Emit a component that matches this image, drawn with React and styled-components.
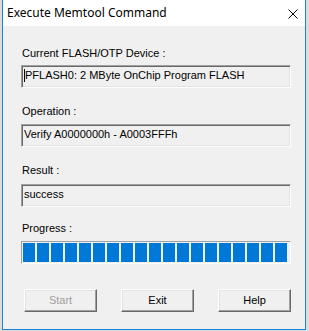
import React from "react";
import styled, { createGlobalStyle } from "styled-components";

const GlobalStyle = createGlobalStyle`
  html, body {
    margin: 0;
    padding: 0;
    background: #dcdcdc;
  }
  body {
    font-family: "Liberation Sans", Arial, sans-serif;
  }
`;

const Desktop = styled.div`
  width: 309px;
  height: 331px;
  overflow: hidden;
`;

const Window = styled.div`
  margin-left: 2px;
  width: 304px;
  height: 330px;
  box-sizing: border-box;
  border: 1px solid #1883d7;
  border-top: none;
  background: #f0f0f0;
  display: flex;
  flex-direction: column;
`;

const TitleBar = styled.div`
  height: 26px;
  background: #fff;
  display: flex;
  align-items: center;
  justify-content: space-between;
  padding: 0 7px 0 4px;
  flex-shrink: 0;
`;

const Title = styled.span`
  font-family: "Noto Sans", "Open Sans", sans-serif;
  font-size: 12px;
  color: #000;
  line-height: 16px;
  margin-top: -1px;
`;

const CloseButton = styled.svg`
  width: 10px;
  height: 10px;
  margin-top: 1px;
`;

const Body = styled.div`
  padding: 21px 14px 0 18px;
  display: flex;
  flex-direction: column;
`;

const Field = styled.div`
  display: flex;
  flex-direction: column;
  gap: ${(p) => p.$gap}px;
  margin-bottom: ${(p) => p.$after}px;
`;

const Label = styled.div`
  font-size: 11px;
  line-height: 13px;
  color: #000;
  padding-left: 1px;
`;

const TextBox = styled.div`
  height: 23px;
  box-sizing: border-box;
  border: 1px solid;
  border-color: #a0a0a0 #fff #fff #a0a0a0;
  box-shadow: inset 1px 1px #696969, inset -1px -1px #e3e3e3;
  background: #f0f0f0;
  padding: 3px 0 0 2px;
  font-size: 11px;
  line-height: 13px;
  color: #000;
  display: flex;
  white-space: nowrap;
`;

const Caret = styled.span`
  width: 1px;
  height: 13px;
  background: #000;
  margin-right: 0px;
`;

const ProgressBar = styled.div`
  height: 23px;
  box-sizing: border-box;
  border: 1px solid;
  border-color: #a0a0a0 #fff #fff #a0a0a0;
  padding: 1px;
  display: flex;
  gap: 2px;
`;

const Block = styled.div`
  width: 12px;
  height: 19px;
  background: #0078d7;
  flex-shrink: 0;
`;

const ButtonRow = styled.div`
  display: flex;
  gap: 24px;
  padding-left: 3px;
`;

const Button = styled.button`
  width: 75px;
  height: 23px;
  box-sizing: border-box;
  border: 1px solid;
  border-color: #fff #696969 #696969 #fff;
  box-shadow: inset -1px -1px #a0a0a0, inset 1px 1px #e3e3e3;
  background: #f0f0f0;
  font-family: "Liberation Sans", Arial, sans-serif;
  font-size: 11px;
  line-height: 13px;
  color: ${(p) => (p.disabled ? "#a0a0a0" : "#000")};
  padding: 0;
  margin: 0;
`;

export default function App() {
  const blocks = Array.from({ length: 19 });

  return (
    <>
      <GlobalStyle />
      <Desktop>
        <Window>
          <TitleBar>
            <Title>Execute Memtool Command</Title>
            <CloseButton viewBox="0 0 10 10">
              <path d="M0.5 0.5 L9.5 9.5 M9.5 0.5 L0.5 9.5" stroke="#000" strokeWidth="1" fill="none" />
            </CloseButton>
          </TitleBar>
          <Body>
            <Field $gap={5} $after={17}>
              <Label>Current FLASH/OTP Device :</Label>
              <TextBox>
                <Caret />
                PFLASH0: 2 MByte OnChip Program FLASH
              </TextBox>
            </Field>
            <Field $gap={6} $after={17}>
              <Label>Operation :</Label>
              <TextBox>Verify A0000000h - A0003FFFh</TextBox>
            </Field>
            <Field $gap={7} $after={15}>
              <Label>Result :</Label>
              <TextBox>success</TextBox>
            </Field>
            <Field $gap={6} $after={25}>
              <Label>Progress :</Label>
              <ProgressBar>
                {blocks.map((_, i) => (
                  <Block key={i} />
                ))}
              </ProgressBar>
            </Field>
            <ButtonRow>
              <Button disabled>Start</Button>
              <Button>Exit</Button>
              <Button>Help</Button>
            </ButtonRow>
          </Body>
        </Window>
      </Desktop>
    </>
  );
}
